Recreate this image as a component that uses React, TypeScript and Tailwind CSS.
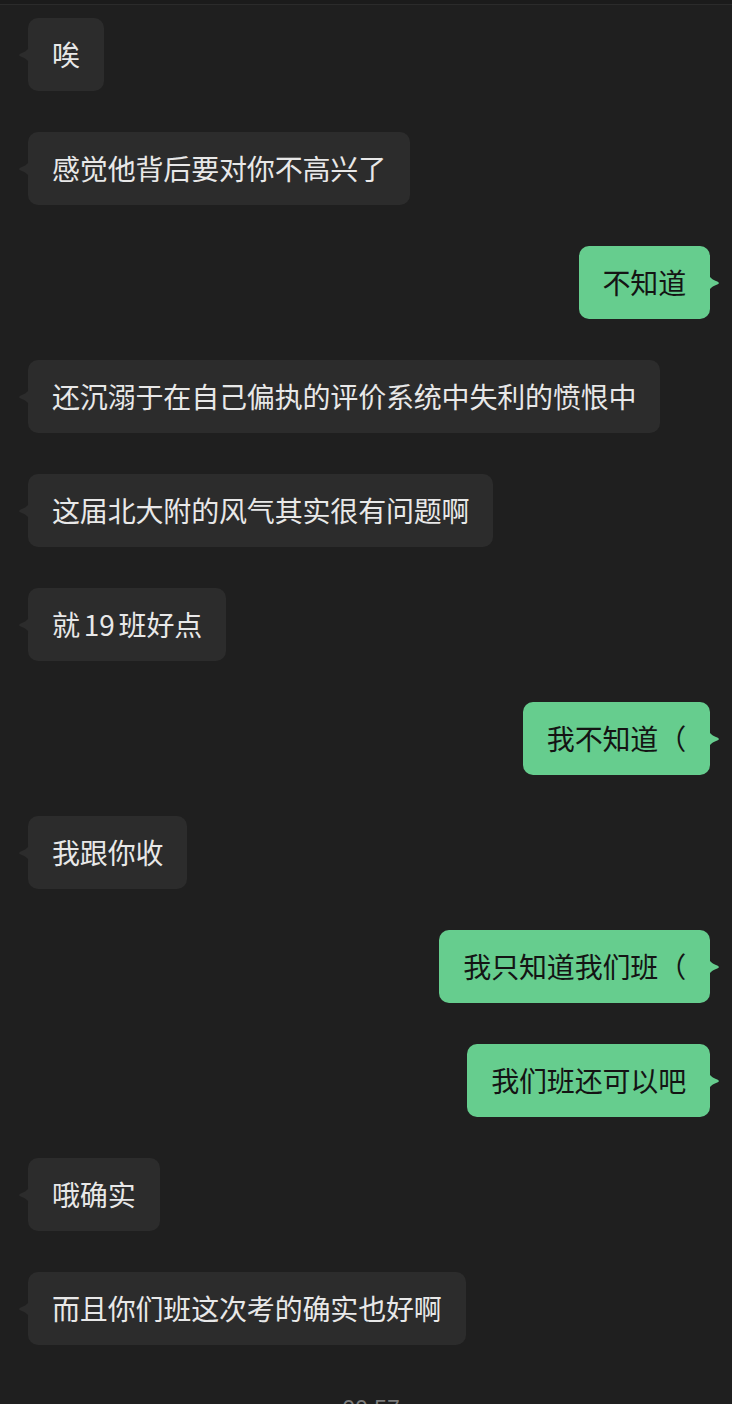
import React from "react";

type Msg = { side: "l" | "r"; text: React.ReactNode };

const msgs: Msg[] = [
  { side: "l", text: "唉" },
  { side: "l", text: "感觉他背后要对你不高兴了" },
  { side: "r", text: "不知道" },
  { side: "l", text: "还沉溺于在自己偏执的评价系统中失利的愤恨中" },
  { side: "l", text: "这届北大附的风气其实很有问题啊" },
  {
    side: "l",
    text: (
      <>
        就<span className="px-[4px]">19</span>班好点
      </>
    ),
  },
  { side: "r", text: "我不知道（" },
  { side: "l", text: "我跟你收" },
  { side: "r", text: "我只知道我们班（" },
  { side: "r", text: "我们班还可以吧" },
  { side: "l", text: "哦确实" },
  { side: "l", text: "而且你们班这次考的确实也好啊" },
];

function TailLeft() {
  return (
    <svg width="11" height="19" viewBox="0 0 11 19" className="absolute left-[-10px] top-1/2 -translate-y-1/2">
      <path d="M11 0 C11 4.5 7 6.2 2.2 8.2 Q0 9.5 2.2 10.8 C7 12.8 11 14.5 11 19 Z" fill="#2c2c2c" />
    </svg>
  );
}

function TailRight() {
  return (
    <svg width="11" height="19" viewBox="0 0 11 19" className="absolute right-[-10px] top-1/2 -translate-y-1/2">
      <path d="M0 0 C0 4.5 4 6.2 8.8 8.2 Q11 9.5 8.8 10.8 C4 12.8 0 14.5 0 19 Z" fill="#66cd8e" />
    </svg>
  );
}

export default function App() {
  return (
    <div
      className="w-[732px] h-[1404px] overflow-hidden bg-[#1f1f1f]"
      style={{ fontFamily: '"Noto Sans CJK SC", "Noto Sans", sans-serif' }}
    >
      <div className="h-[4px] bg-[#1b1b1b]" />
      <div className="h-[1px] bg-[#2b2b2b]" />
      <div className="flex flex-col gap-[41px] pt-[13px] pl-[28px] pr-[22px]">
        {msgs.map((m, i) =>
          m.side === "l" ? (
            <div key={i} className="flex justify-start">
              <div className="relative rounded-[10px] bg-[#2c2c2c] px-[24px] py-[18px] text-[28px] leading-[37px] tracking-[-0.17px] text-[#e8e8e8] whitespace-nowrap">
                <TailLeft />
                {m.text}
              </div>
            </div>
          ) : (
            <div key={i} className="flex justify-end">
              <div className="relative rounded-[10px] bg-[#66cd8e] px-[24px] py-[18px] text-[28px] leading-[37px] tracking-[-0.17px] text-[#141414] whitespace-nowrap">
                <TailRight />
                {m.text}
              </div>
            </div>
          )
        )}
      </div>
      <div
        className="mt-[49px] pl-[10px] text-center text-[23px] leading-[30px] text-[#7c7c7c]"
        style={{ fontFamily: '"Liberation Sans", sans-serif' }}
      >
        00:57
      </div>
    </div>
  );
}
